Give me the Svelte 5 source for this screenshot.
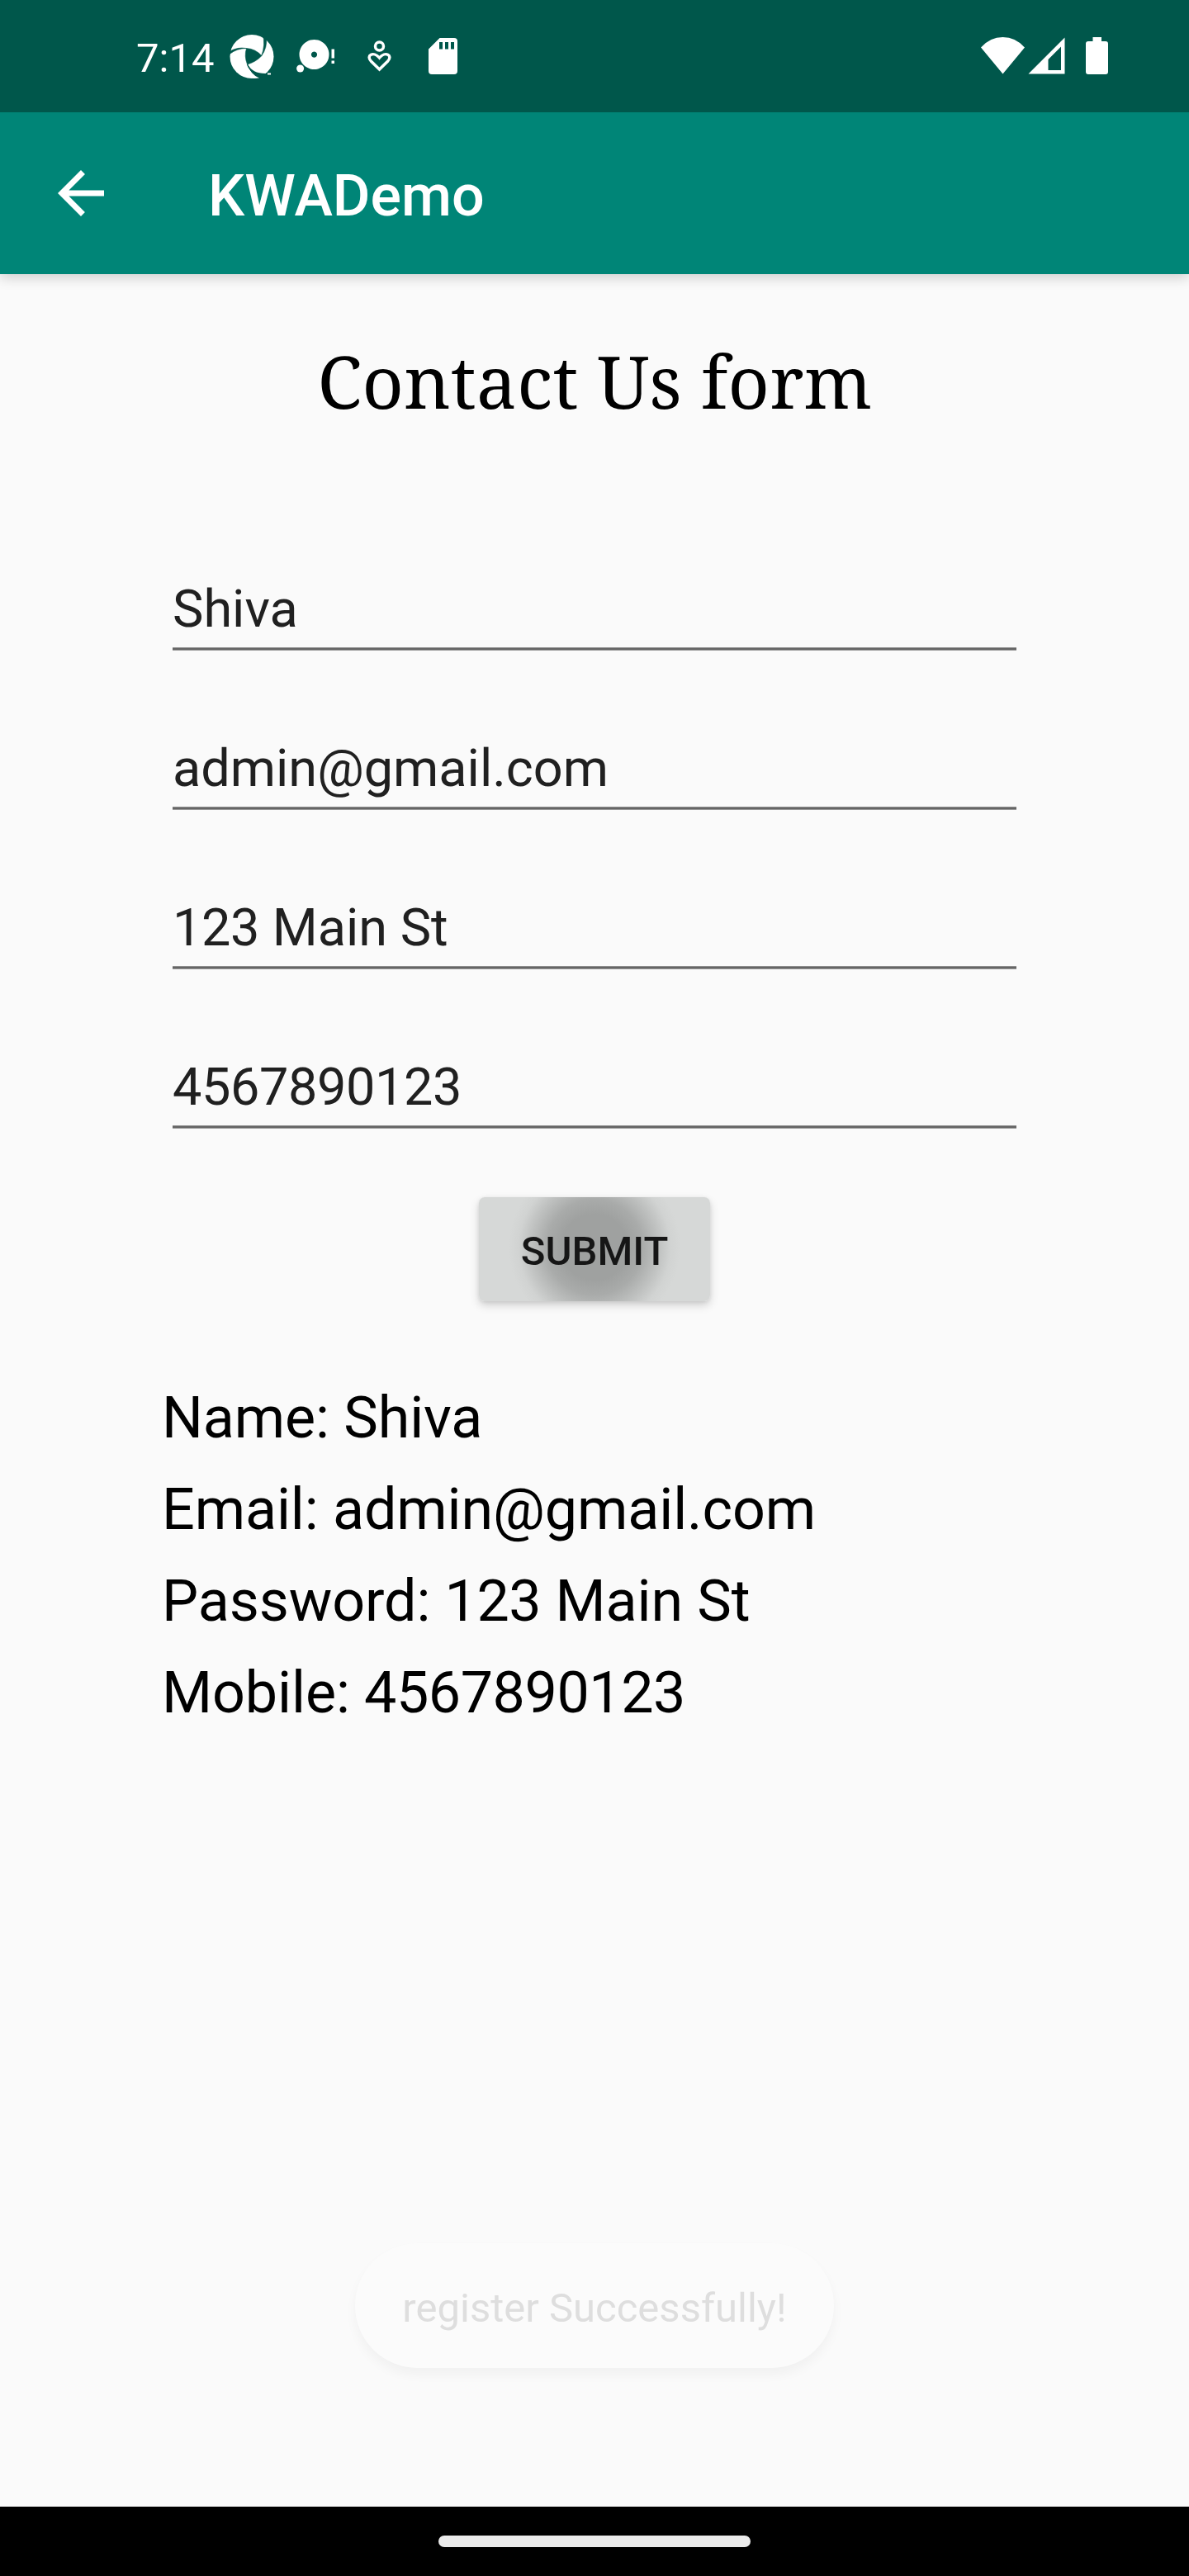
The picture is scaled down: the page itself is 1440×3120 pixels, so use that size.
<script>
  const fields = ['Shiva', 'admin@gmail.com', '123 Main St', '4567890123'];
  const results = [
    'Name: Shiva',
    'Email: admin@gmail.com',
    'Password: 123 Main St',
    'Mobile: 4567890123'
  ];

  // Digit runs are set slightly tighter than letters.
  const parts = (text) =>
    text
      .split(/(\d+)/)
      .filter(Boolean)
      .map((t) => ({ t, digits: /^\d/.test(t) }));
</script>

{#snippet label(text)}{#each parts(text) as p}<span class:digits={p.digits}>{p.t}</span>{/each}{/snippet}

<div class="screen">
  <div class="status">
    <span class="clock">7:14</span>
    <svg class="notifications" width="290" height="60" viewBox="0 0 290 60" fill="#fff">
      <!-- aperture -->
      <g transform="translate(-1 0)">
        <circle cx="27" cy="28.500" r="26.500" />
        <g fill="#00574b" stroke="#00574b" stroke-width="0.600">
          <path d="M20.500 18.500Q31 19 39 27.500Q32 35 21.500 38Q17.500 28 20.500 18.500Z" />
          <path d="M0 22.500Q9 16.500 20.500 18.500Q9 18.500 0 25.500Z" />
          <path d="M40 1L44.500 5Q46 18 38.500 28Q44 14 40 1Z" />
          <path d="M21.500 37.500Q28 49 43 49L46 50L35.500 55.500Q25 50 21.500 37.500Z" stroke="none" />
        </g>
        <path d="M22 38.500Q25 50 36 54.500L29 55Q20 48 21 38.500Z" />
        <path d="M21.500 38Q24.500 46 34 51.500L38 53" fill="none" stroke="#00574b" stroke-width="1.400" />
        <rect x="46" y="48.500" width="4" height="2" />
      </g>
      <!-- disc -->
      <path fill-rule="evenodd" d="M101.500 8a18 18 0 1 0 .01 0ZM101.500 22.500a3.600 3.600 0 1 1-.01 0Z" />
      <circle cx="84.600" cy="43" r="4.500" />
      <rect x="122.500" y="19.500" width="3.500" height="11" /><rect x="122.500" y="33.500" width="3.500" height="3.500" />
      <!-- person with heart -->
      <g fill="none" stroke="#fff" stroke-width="3.500">
        <circle cx="180.500" cy="16" r="5" />
        <path d="M180.500 44L170.500 34.200C163.500 27 173.500 21.500 180.500 30C187.500 21.500 197.500 27 190.500 34.200Z" />
      </g>
      <!-- memory card -->
      <path fill-rule="evenodd" d="M253.500 6H271a4 4 0 0 1 4 4V46a4 4 0 0 1-4 4H244a4 4 0 0 1-4-4V19.500ZM253 11v8.500h4V11ZM260 11v8.500h4V11ZM267 11v8.500h4V11Z" />
    </svg>
    <svg class="system" width="160" height="50" viewBox="0 0 160 50" fill="#fff">
      <path d="M0 13.500Q11 1 26.500 1T53 13.500L26.500 45.500Z" />
      <path fill-rule="evenodd" d="M57.500 45.500L101.500 1.500V45.500ZM81.500 41H97V12.500L81.500 28Z" />
      <path d="M135.500 1H146V6H151a3 3 0 0 1 3 3V43a3 3 0 0 1-3 3H130a3 3 0 0 1-3-3V9a3 3 0 0 1 3-3H135.500Z" />
    </svg>
  </div>
  <header>
    <svg width="56" height="56" viewBox="4 4 16 16"><path fill="#fff" d="M20 11H7.830l5.590-5.590L12 4l-8 8 8 8 1.410-1.410L7.830 13H20v-2z" /></svg>
    <span>KWADemo</span>
  </header>
  <main>
    <h1>Contact Us form</h1>
    <div class="fields">
      {#each fields as value}
        <div class="field">{@render label(value)}</div>
      {/each}
    </div>
    <button>SUBMIT</button>
    <div class="results">
      {#each results as line}
        <div class="result">{@render label(line)}</div>
      {/each}
    </div>
    <div class="toast"><span>register Successfully!</span></div>
  </main>
  <nav><div></div></nav>
</div>

<style>
  :global(body) {
    margin: 0;
  }
  .screen {
    width: 1440px;
    height: 3120px;
    display: flex;
    flex-direction: column;
    background: #fafafa;
    font-family: Roboto, sans-serif;
    overflow: hidden;
  }
  .status {
    height: 136px;
    flex: none;
    display: flex;
    background: #00574b;
    color: #fff;
    z-index: 2;
  }
  .clock {
    width: 114px;
    margin-left: 165px;
    font-size: 49px;
    line-height: 57px;
    padding-top: 42px;
    white-space: nowrap;
  }
  .notifications {
    margin-top: 40px;
    overflow: visible;
  }
  .system {
    margin: 44px 92px 0 auto;
  }
  header {
    height: 196px;
    flex: none;
    display: flex;
    align-items: center;
    padding-left: 70px;
    background: #008577;
    color: #fff;
    font-size: 70px;
    font-weight: 500;
    box-shadow: 0 5px 14px rgba(0, 0, 0, 0.16);
    z-index: 1;
  }
  header span {
    margin: 6px 0 0 126px;
    line-height: 82px;
  }
  main {
    flex: 1;
    display: flex;
    flex-direction: column;
    align-items: center;
  }
  h1 {
    margin: 69px 0 0;
    font: 400 87.5px/120px 'Noto Serif', 'Droid Serif', 'DejaVu Serif Condensed', serif;
    letter-spacing: 0.2px;
    padding-left: 1px;
    color: #000;
    white-space: nowrap;
  }
  .fields {
    margin-top: 74px;
    width: 1022px;
  }
  .field {
    height: 193px;
    box-sizing: border-box;
    background: linear-gradient(#8e8e8e 0 1px, #656565 1px 3px, #989898 3px) bottom / 100% 4px no-repeat;
    padding-top: 106px;
    font-size: 63px;
    line-height: 73px;
    color: #202020;
  }
  .digits {
    letter-spacing: -0.4px;
  }
  button {
    width: 280px;
    height: 126px;
    margin-top: 83px;
    padding: 5px 0 0;
    border: 0;
    border-radius: 7px;
    background: radial-gradient(circle at 50% 48%, #9fa1a0 0 40px, #a9abaa 58px, #c0c2c1 78px, #d1d3d2 92px, #d6d8d7 104px);
    box-shadow: 0 5px 11px rgba(0, 0, 0, 0.17), 0 1px 4px rgba(0, 0, 0, 0.08);
    font: 500 49px/58px Roboto, sans-serif;
    color: #161616;
  }
  .results {
    width: 1048px;
    margin-top: 86px;
    font-size: 70px;
    letter-spacing: -0.1px;
    color: #000;
  }
  .result {
    line-height: 110px;
    padding-bottom: 1px;
  }
  .results .digits {
    letter-spacing: -0.45px;
  }
  .toast {
    box-sizing: border-box;
    margin: auto 0 168px;
    width: 580px;
    height: 151px;
    padding-top: 6px;
    border-radius: 76px;
    display: flex;
    align-items: center;
    justify-content: center;
    background: #fbfbfb;
    box-shadow: 0 8px 14px rgba(0, 0, 0, 0.04);
    font-size: 49px;
    line-height: 60px;
    color: #dedede;
  }
  nav {
    height: 84px;
    flex: none;
    background: #000;
    display: flex;
    align-items: center;
    justify-content: center;
  }
  nav div {
    width: 378px;
    height: 14px;
    border-radius: 7px;
    background: #ebebeb;
  }
</style>
